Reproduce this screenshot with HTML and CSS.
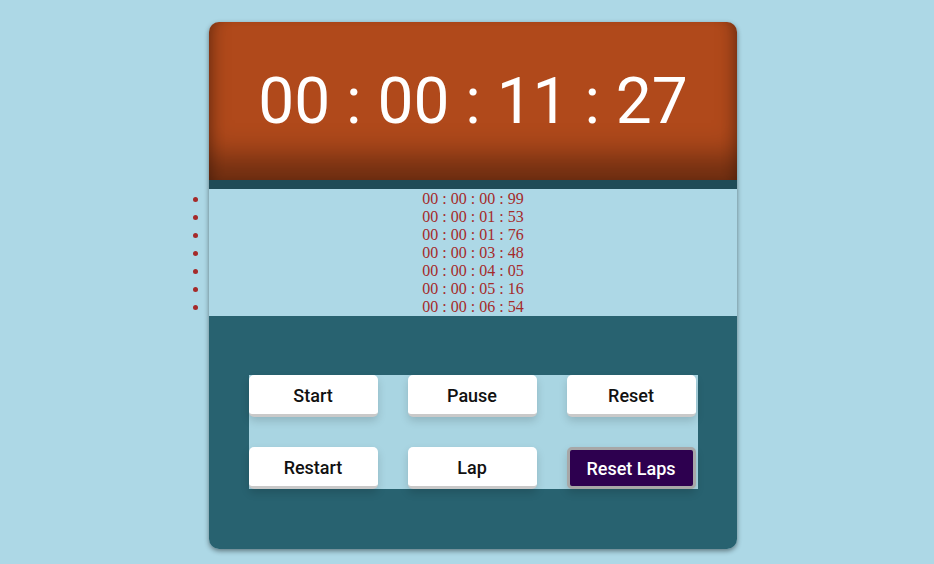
FILE: index.html
```html
<!DOCTYPE html>
<html>
<head>
<meta charset="utf-8">
<link rel="stylesheet" href="styles.css">
</head>
<body>
<div class="watch">
  <div class="display">00 : 00 : 11 : 27</div>
  <div class="strip"></div>
  <ul class="laps">
    <li>00 : 00 : 00 : 99</li>
    <li>00 : 00 : 01 : 53</li>
    <li>00 : 00 : 01 : 76</li>
    <li>00 : 00 : 03 : 48</li>
    <li>00 : 00 : 04 : 05</li>
    <li>00 : 00 : 05 : 16</li>
    <li>00 : 00 : 06 : 54</li>
  </ul>
  <div class="controls">
    <div class="grid">
      <button class="btn">Start</button>
      <button class="btn">Pause</button>
      <button class="btn">Reset</button>
      <button class="btn">Restart</button>
      <button class="btn">Lap</button>
      <button class="btn active">Reset Laps</button>
    </div>
  </div>
</div>
</body>
</html>
```
FILE: styles.css
```css
html, body {
  margin: 0;
  padding: 0;
  background: #add8e6;
}
body {
  padding: 22px 0 0 209px;
  height: 564px;
  box-sizing: border-box;
  overflow: hidden;
}
.watch {
  width: 528px;
  border-radius: 10px;
  box-shadow: 0 2px 5px rgba(0, 0, 0, 0.45);
}
.display {
  height: 158px;
  background: #b0491b;
  box-shadow: inset 0 -34px 30px -10px rgba(0, 0, 0, 0.38),
              inset 12px 0 14px -10px rgba(0, 0, 0, 0.3),
              inset -12px 0 14px -10px rgba(0, 0, 0, 0.3);
  color: #fff;
  font-family: Roboto, "Liberation Sans", sans-serif;
  font-size: 64px;
  display: flex;
  align-items: center;
  justify-content: center;
  border-radius: 10px 10px 0 0;
}
.strip {
  height: 9px;
  background: #1f4b57;
}
.laps {
  margin: 0;
  padding: 0;
  background: #add8e6;
  color: #a52a2a;
  font-family: "Liberation Serif", "Times New Roman", serif;
  font-size: 16px;
  text-align: center;
  height: 127px;
  line-height: 18px;
  padding-top: 1px;
  box-sizing: border-box;
}
.laps li {
  list-style: disc outside;
}
.controls {
  background: #286270;
  height: 233px;
  display: flex;
  justify-content: center;
  align-items: center;
  border-radius: 0 0 10px 10px;
}
.grid {
  display: grid;
  grid-template-columns: repeat(3, 129px);
  grid-template-rows: repeat(2, 42px);
  column-gap: 30px;
  row-gap: 30px;
  width: 449px;
  background: #a9d5e2;
  margin-top: -2px;
}
.btn {
  background: #fff;
  border: none;
  border-bottom: 3px solid #c9c9c9;
  border-radius: 5px;
  font-family: Roboto, "Liberation Sans", sans-serif;
  font-weight: 500;
  font-size: 18px;
  color: #111;
  box-shadow: 0 4px 8px rgba(0, 0, 0, 0.15);
  padding: 3px 0 0;
}
.btn.active {
  background: #2d004f;
  color: #fff;
  border: 3px solid #a7a7a7;
  padding: 2px 0 0;
}
```
